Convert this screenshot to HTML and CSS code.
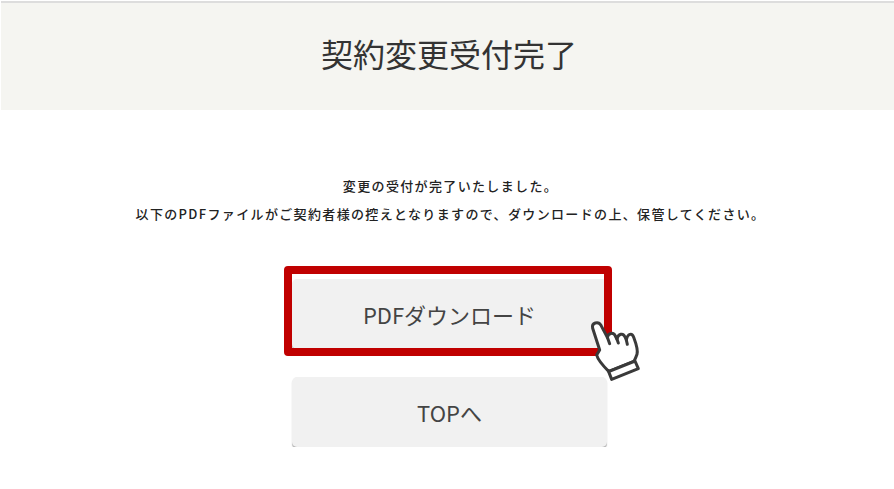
FILE: index.html
```html
<!DOCTYPE html>
<html lang="ja">
    <head>
        <meta charset="UTF-8" />
        <meta name="viewport" content="width=device-width, initial-scale=1.0" />
        <title>契約変更受付完了</title>
        <link rel="stylesheet" href="styles.css">
    </head>
    <body>
        <div class="page-head">
            <h1>契約変更受付完了</h1>
        </div>

        <div class="message">
            <p>変更の受付が完了いたしました。</p>
            <p>以下のPDFファイルがご契約者様の控えとなりますので、ダウンロードの上、保管してください。</p>
        </div>

        <div class="actions">
            <div class="pdf-wrap">
                <a class="btn btn-pdf" href="#">PDFダウンロード</a>
                <div class="frame"></div>
                <svg class="hand" viewBox="0 0 270 270" width="90" height="90" aria-hidden="true">
                    <path class="hand-fill" d="M68 85C64 68 85 62 93 76L112 112C115 98 131 96 136 108L141 118C144 100 160 98 165 111L169 120C173 100 186 98 191 112C197 128 205 148 201 163C198 172 194 180 192 184L116 214C100 198 84 182 80 165L89 150Z"/>
                    <path class="hand-line" d="M112 112L119 131M141 118L145 129M169 120L172 133"/>
                    <path class="hand-fill" d="M116 215L195 183L205 206L125 238Z"/>
                </svg>
            </div>
            <a class="btn" href="#">TOPへ</a>
        </div>
    </body>
</html>
```

FILE: styles.css
```css
* {
    box-sizing: border-box;
}

body {
    margin: 0;
    font-family: "Noto Sans CJK JP", "Noto Sans", sans-serif;
    color: #333;
    background-color: #fff;
}

.page-head {
    height: 109px;
    margin-left: 1px;
    margin-top: 1px;
    padding: 0 0 7px 3px;
    border-top: 2px solid #ddd;
    background-color: #f5f5f1;
    display: flex;
    align-items: center;
    justify-content: center;
}

.page-head h1 {
    margin: 0;
    font-size: 32px;
    font-weight: 400;
    line-height: 1.2;
}

.message {
    margin-top: 67px;
    padding-left: 7px;
    text-align: center;
    font-size: 13px;
    font-weight: 500;
    letter-spacing: 1.35px;
    color: #222;
}

.message p {
    margin: 0 0 10px;
    line-height: 18px;
}

.actions {
    margin-top: 56px;
    padding-left: 5px;
    display: flex;
    flex-direction: column;
    align-items: center;
    gap: 28px;
}

.pdf-wrap {
    position: relative;
}

.btn {
    display: flex;
    align-items: center;
    justify-content: center;
    width: 315px;
    height: 70px;
    border-radius: 5px;
    background-color: #f1f1f1;
    box-shadow: 0 2px 1px #b5b5b5;
    color: #444;
    font-size: 22px;
    text-decoration: none;
}

.frame {
    position: absolute;
    top: -13px;
    right: -5px;
    bottom: -7px;
    left: -8px;
    border: 8px solid #c00000;
    border-radius: 4px;
}

.hand {
    position: absolute;
    left: 278px;
    top: 21px;
}

.hand-fill {
    fill: #fff;
    stroke: #3a3a3a;
    stroke-width: 9;
    stroke-linejoin: round;
}

.hand-line {
    fill: none;
    stroke: #3a3a3a;
    stroke-width: 9;
    stroke-linecap: round;
}
```
